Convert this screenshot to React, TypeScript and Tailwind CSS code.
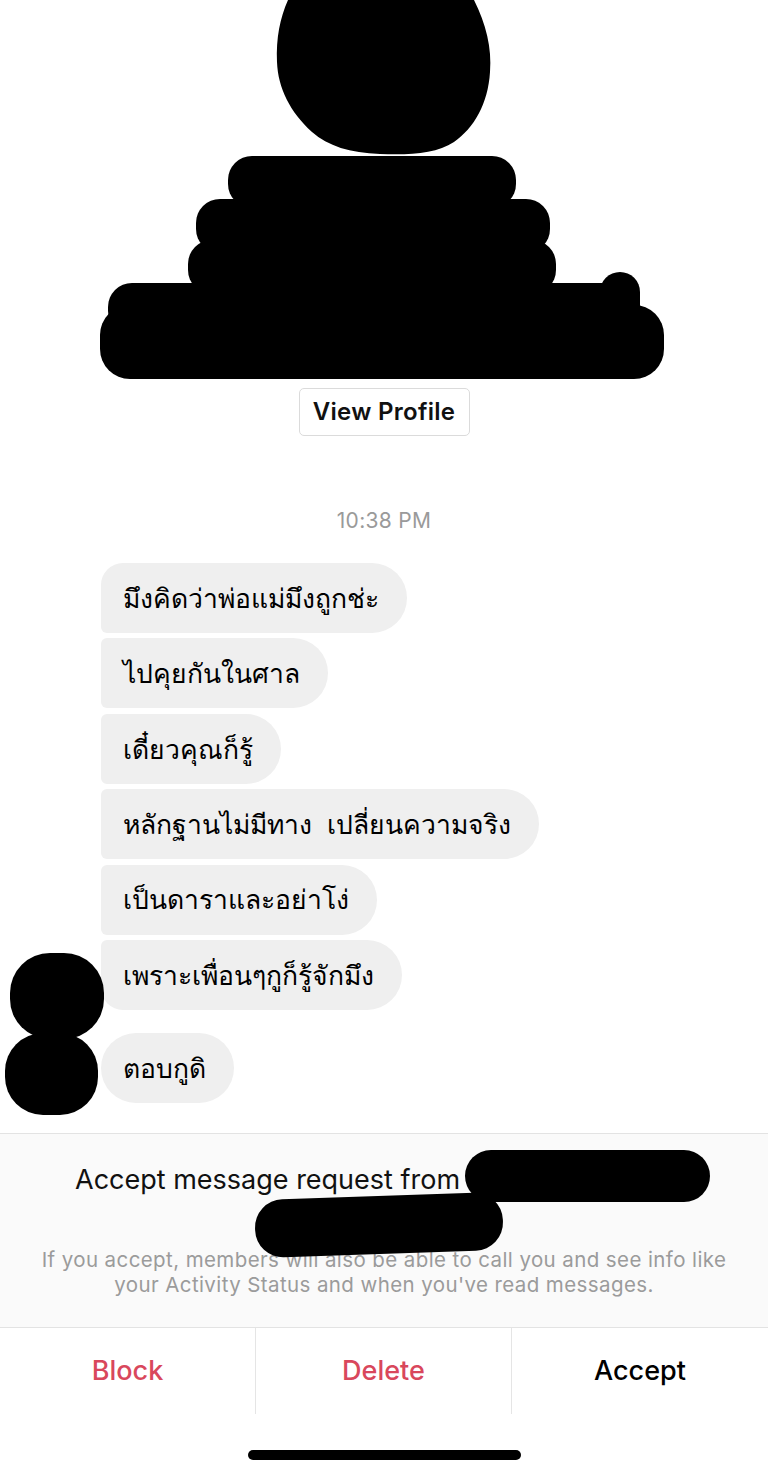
import React from 'react';

const sans = "font-['Inter','Noto_Sans',sans-serif]";

const messages = [
  { text: 'มึงคิดว่าพ่อแม่มึงถูกช่ะ', shape: 'rounded-r-[35px] rounded-tl-[22px] rounded-bl-[6px]' },
  { text: 'ไปคุยกันในศาล', shape: 'rounded-r-[35px] rounded-l-[6px]' },
  { text: 'เดี๋ยวคุณก็รู้', shape: 'rounded-r-[35px] rounded-l-[6px]' },
  { text: 'หลักฐานไม่มีทาง  เปลี่ยนความจริง', shape: 'rounded-r-[35px] rounded-l-[6px]' },
  { text: 'เป็นดาราและอย่าโง่', shape: 'rounded-r-[35px] rounded-l-[6px]' },
  { text: 'เพราะเพื่อนๆกูก็รู้จักมึง', shape: 'rounded-r-[35px] rounded-tl-[6px] rounded-bl-[22px]' },
];

const ProfileScribble = () => (
  <svg width="768" height="380" viewBox="0 0 768 380" className="block">
    <path
      d="M288 0 L474 0 C486 24 492 48 490 72 C488 104 474 128 454 142 C436 154 410 155 380 154 C350 153 328 146 312 132 C290 112 278 88 277 62 C276 38 280 18 288 0 Z"
      fill="#000"
    />
    <rect x="228" y="156" width="288" height="52" rx="24" fill="#000" />
    <rect x="196" y="199" width="354" height="54" rx="24" fill="#000" />
    <rect x="188" y="240" width="368" height="54" rx="24" fill="#000" />
    <rect x="108" y="283" width="530" height="52" rx="24" fill="#000" />
    <rect x="600" y="272" width="40" height="60" rx="20" fill="#000" />
    <rect x="100" y="305" width="564" height="74" rx="30" fill="#000" />
  </svg>
);

const Bubble = ({ text, shape }: { text: string; shape: string }) => (
  <div className={`flex h-[70px] items-center self-start bg-[#efefef] pl-[22px] pr-[28px] ${shape}`}>
    <span className="whitespace-pre text-[26.5px] leading-none text-black">{text}</span>
  </div>
);

export default function App() {
  return (
    <div className={`relative mx-auto flex min-h-[1473px] w-[768px] flex-col bg-white ${sans}`}>
      <ProfileScribble />

      <div className="mt-[8px] flex justify-center">
        <button className="h-[48px] w-[171px] rounded-[5px] border border-[#dbdbdb] bg-white text-[24px] font-semibold tracking-[0.3px] text-[#111]">
          View Profile
        </button>
      </div>

      <div className="mt-[72px] text-center text-[21px] leading-[26px] tracking-[0.3px] text-[#9a9a9a]">10:38 PM</div>

      <div className="relative mt-[29px] flex flex-col pl-[101px]">
        <div className="flex flex-col gap-[5.4px]">
          {messages.map((m) => (
            <Bubble key={m.text} text={m.text} shape={m.shape} />
          ))}
        </div>
        <div className="mt-[23px] flex">
          <Bubble text="ตอบกูดิ" shape="rounded-[35px]" />
        </div>

        <svg width="110" height="170" viewBox="0 0 110 170" className="absolute left-0 top-[390px]">
          <rect x="10" y="0" width="94" height="86" rx="40" fill="#000" />
          <rect x="5" y="80" width="93" height="82" rx="38" fill="#000" />
        </svg>
      </div>

      <div className="relative mt-[30px] flex h-[195px] flex-col items-center border-y border-[#e3e3e3] bg-[#fafafa]">
        <div className="mt-[31px] w-full pl-[75px] text-[27px] leading-[30px] text-[#111]">
          Accept message request from
        </div>
        <p className="mt-[52px] px-[30px] text-center text-[20.5px] leading-[25px] tracking-[0.4px] text-[#9b9b9b]">
          If you accept, members will also be able to call you and see info like
          <br />
          your Activity Status and when you've read messages.
        </p>
        <div className="absolute left-[465px] top-[16px] h-[52px] w-[245px] rounded-[26px] bg-black" />
        <div className="absolute left-[255px] top-[62px] h-[58px] w-[248px] -rotate-2 rounded-[28px] bg-black" />
      </div>

      <div className="grid h-[86px] grid-cols-3">
        <button className="flex items-center justify-center border-r border-[#e5e5e5] text-[27px] font-medium text-[#d9475c]">
          Block
        </button>
        <button className="flex items-center justify-center border-r border-[#e5e5e5] text-[27px] font-medium text-[#d9475c]">
          Delete
        </button>
        <button className="flex items-center justify-center text-[27px] font-medium text-black">
          Accept
        </button>
      </div>

      <div className="mt-[36px] flex justify-center">
        <div className="h-[10px] w-[273px] rounded-full bg-black" />
      </div>
    </div>
  );
}
